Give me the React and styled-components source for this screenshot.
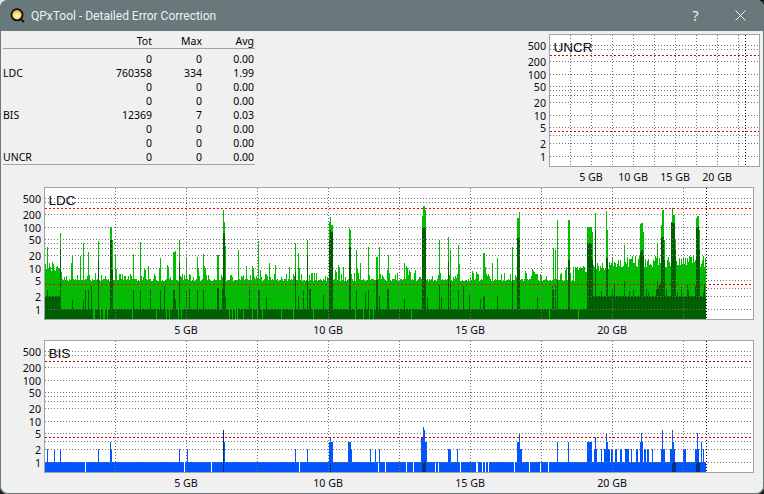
import React from "react";
import styled, { createGlobalStyle } from "styled-components";

const Global = createGlobalStyle`
  html, body { margin: 0; padding: 0; width: 764px; height: 494px; overflow: hidden;
    background: radial-gradient(circle at 0 0, #dfe3e3 7px, #1c1f20 9px); }
  #root { width: 764px; height: 494px; }
`;

const Win = styled.div`
  width: 764px; height: 494px; box-sizing: border-box; display: flex; flex-direction: column;
  background: #f0f0f0; border-radius: 8px; overflow: hidden; position: relative;
  box-shadow: inset 0 0 0 1px #69787b;
  font-family: "Noto Sans", Arial, sans-serif; font-size: 10.5px; color: #000;
`;
const TitleBar = styled.div`
  height: 31px; flex: none; display: flex; align-items: center; background: #69787b;
  padding-left: 10px; color: #eef1f1;
`;
const TitleText = styled.div`
  font-family: "Roboto", sans-serif; font-size: 12px; margin-left: 6px; flex: 1;
`;
const CapBtn = styled.div`
  width: 46px; height: 31px; display: flex; align-items: center; justify-content: center;
  font-family: "Noto Sans", sans-serif; font-size: 14px; color: #f2f4f4;
`;
const HelpBtn = styled(CapBtn)` padding-left: 3px; box-sizing: border-box; `;
const EdgeGap = styled.div` width: 1px; flex: none; `;
const TopRow = styled.div` height: 156px; flex: none; display: flex; justify-content: space-between; `;
const StatTable = styled.div` margin: 3px 0 0 3px; width: 252px; display: flex; flex-direction: column; `;
const StatRow = styled.div`
  display: grid; grid-template-columns: 100px 50px 50px 52px; height: 14px;
`;
const HeadRow = styled(StatRow)`
  height: 15px; box-sizing: border-box; border-bottom: 1px solid #a3a3a3; margin-bottom: 3px; 
`;
const StatBody = styled.div` border-bottom: 1px solid #a3a3a3; `;
const Cell = styled.div`
  line-height: 14px; text-align: ${(p) => (p.$left ? "left" : "right")};
  padding-right: ${(p) => (p.$left ? "0" : "1px")}; white-space: nowrap;
`;
const ChartSvg = styled.svg`
  display: block; flex: none;
  margin-top: ${(p) => p.$top || 0}px;
  text { font-family: "Noto Sans", Arial, sans-serif; font-size: 10.7px; fill: #0a0a14; }
  text.name { font-family: "Liberation Sans", Arial, sans-serif; font-size: 13.5px; }
`;

function rng(seed) {
  let s = seed;
  return () => {
    s = (s * 1664525 + 1013904223) % 4294967296;
    return s / 4294967296;
  };
}

const GRID = [198, 202, 214, 227, 239, 243, 248, 255, 268, 280, 288, 296, 309];
const RED = [208, 284];

const LDC_SPIKES = [
  [47, 247, 290, 1], [60, 233, 248, 1], [72, 256, 300, 1], [80, 256, 309, 1], [83, 243, 300, 1], [88, 252, 290, 1], [98, 241, 260, 1],
  [110, 227, 240, 1], [111, 227, 240, 1], [112, 240, 270, 1], [115, 255, 309, 1], [133, 254, 290, 1], [140, 242, 290, 1],
  [160, 258, 290, 1], [173, 252, 290, 2], [175, 251, 300, 1], [179, 240, 262, 1], [186, 258, 290, 1], [197, 257, 290, 1], [203, 254, 290, 1],
  [217, 255, 288, 2], [223, 210, 233, 1], [224, 222, 233, 1], [225, 246, 296, 1], [238, 250, 309, 1], [258, 241, 290, 1],
  [269, 263, 309, 1], [275, 265, 309, 1], [295, 243, 272, 1], [298, 253, 296, 1], [307, 240, 255, 1], [329, 222, 240, 1], [330, 217, 230, 2],
  [331, 225, 232, 2], [349, 228, 247, 2], [350, 230, 247, 1], [356, 250, 290, 1], [368, 247, 290, 1], [376, 257, 280, 2], [379, 247, 296, 1],
  [388, 255, 290, 1], [422, 216, 228, 2], [423, 206, 228, 2], [425, 210, 228, 1], [439, 240, 285, 1], [448, 237, 262, 1], [450, 250, 280, 1], [458, 245, 290, 1],
  [483, 253, 296, 2], [497, 258, 296, 1], [512, 247, 280, 1], [517, 218, 238, 2], [519, 212, 238, 1], [553, 248, 290, 1], [557, 220, 280, 1], [555, 250, 285, 1],
  [568, 220, 260, 2], [587, 227, 243, 3], [590, 227, 243, 2], [592, 232, 260, 1], [595, 213, 230, 1], [606, 211, 258, 1], [607, 230, 258, 1],
  [624, 245, 280, 1], [640, 224, 252, 1], [641, 223, 250, 2], [643, 232, 255, 1], [657, 244, 280, 1], [661, 225, 237, 1], [662, 210, 237, 2], [664, 240, 260, 1],
  [671, 222, 223, 2], [672, 208, 223, 1], [673, 215, 223, 2], [675, 240, 250, 1], [688, 262, 290, 1], [696, 218, 227, 2], [697, 216, 227, 2], [699, 230, 250, 1],
];

function buildLdc() {
  const r = rng(77);
  const light = [];
  const dark = [];
  const spikes = {};
  for (const [x, t, d, w] of LDC_SPIKES) for (let i = 0; i < w; i++) spikes[x + i] = [t, d];
  let carry = 0;
  for (let x = 45; x <= 705; x++) {
    let lt;
    const n = r();
    if (x < 60) lt = 262 + Math.floor(r() * 10);
    else if (x < 575) {
      lt = 279 + Math.floor(r() * 3);
      if (carry) { lt = carry; carry = 0; }
      else if (n < 0.15) { lt = 263 + Math.floor(r() * 14); if (r() < 0.3) carry = lt + 2; }
      else if (n < 0.34) lt = 273 + Math.floor(r() * 5);
    } else if (x < 587) lt = 266 + Math.floor(r() * 8);
    else if (x < 612) lt = 262 + Math.floor(r() * 10);
    else lt = 256 + Math.floor(r() * 12);
    let dk = x < 60 ? 296 : x >= 587 ? 296 : 309;
    const m = r();
    if (x < 587) {
      if (x >= 60 && m < 0.05) dk = 319;
      else if (m < 0.1) dk = 286 + Math.floor(r() * 14);
    } else {
      if (x >= 612 && m < 0.35) dk = 283 + Math.floor(r() * 10);
      else if (m < 0.12) dk = 285 + Math.floor(r() * 8);
    }
    if ((x >= 167 && x <= 186 && m > 0.7) || (x >= 226 && x <= 245 && m > 0.75) || x === 93 || x === 100 || x === 104 || x === 107) dk = 319;
    if (spikes[x]) { lt = spikes[x][0]; dk = Math.min(spikes[x][1], 309); }
    light.push(`M${x} ${lt}V319`);
    dark.push(`M${x} ${dk}V319`);
  }
  return { light: light.join(""), dark: dark.join("") };
}

const BIS_TALL = [
  [47, 449, 1], [54, 449, 1], [60, 449, 1], [98, 449, 1], [110, 442, 1], [111, 449, 1], [179, 449, 1], [187, 449, 1], [223, 430, 1], [224, 442, 1],
  [295, 449, 1], [307, 449, 1], [329, 442, 1], [330, 437, 1], [331, 442, 2], [348, 442, 3], [351, 449, 1], [370, 449, 1], [375, 449, 1], [379, 449, 1],
  [421, 437, 2], [423, 427, 1], [424, 430, 1], [425, 442, 2], [448, 449, 3], [457, 449, 1], [517, 442, 2], [519, 433, 1], [520, 449, 1], [521, 449, 1], [557, 442, 1],
  [568, 442, 1], [587, 442, 5], [594, 449, 3], [595, 437, 1], [601, 449, 1], [604, 449, 6], [606, 433, 1], [607, 442, 1], [611, 449, 2], [615, 449, 2], [620, 449, 2],
  [625, 449, 4], [631, 449, 1], [636, 449, 2], [640, 442, 3], [641, 433, 1], [644, 449, 2], [647, 449, 2], [652, 449, 1], [661, 449, 4], [662, 430, 1],
  [670, 449, 5], [672, 430, 1], [673, 442, 1], [683, 449, 3], [695, 449, 4], [697, 433, 1], [701, 442, 1], [703, 449, 1],
];
const BIS_GAPS = [85, 184, 211, 299, 378, 385, 406, 413, 435, 438, 460, 476, 477, 482, 485, 488, 514, 529, 540, 548];
const BIS_DARK = [[223, 223], [330, 330], [422, 425], [672, 675], [696, 699]];

function buildBis() {
  const tall = {};
  for (const [x, t, w] of BIS_TALL) for (let i = 0; i < w; i++) tall[x + i] = Math.min(t, tall[x + i] || 999);
  const blue = [];
  const dark = [];
  for (let x = 45; x <= 705; x++) {
    if (BIS_GAPS.includes(x)) continue;
    blue.push(`M${x} ${(tall[x] || 462) - 153}V319`);
  }
  for (const [a, b] of BIS_DARK) for (let x = a; x <= b; x++) dark.push(`M${x} ${x === 223 ? 430 - 153 : 462 - 153}V319`);
  return { blue: blue.join(""), dark: dark.join("") };
}

const Y_LABELS = [[500, 199], [200, 215], [100, 228], [50, 240], [20, 256], [10, 269], [5, 281], [2, 297], [1, 310]];

function Chart({ name, ox, left, right, vx, end, xlabels, children, top, red = "#e00000" }) {
  const width = 764 - ox;
  const X = (x) => x - ox;
  const Y = (y) => y - 187;
  return (
    <ChartSvg width={width} height={153} viewBox={`0 0 ${width} 153`} $top={top}>
      <rect x={X(left) + 0.5} y={0.5} width={right - left} height={132} fill="#fff" />
      <g transform={`translate(${-ox} -187)`} shapeRendering="crispEdges" strokeWidth="1" fill="none">
        {children}
      </g>
      <g shapeRendering="crispEdges" strokeWidth="1">
        {GRID.map((g) => (
          <line key={g} x1={X(left) + 1} x2={X(right)} y1={Y(g) + 0.5} y2={Y(g) + 0.5} stroke="#737373" strokeDasharray="1 2" />
        ))}
        {vx.map((v) => (
          <line key={v} x1={X(v) + 0.5} x2={X(v) + 0.5} y1={1} y2={132} stroke="#737373" strokeDasharray="1 2" />
        ))}
        <line x1={X(end) + 0.5} x2={X(end) + 0.5} y1={1} y2={132} stroke="#000" strokeDasharray="1 2" />
        {RED.map((g) => (
          <line key={g} x1={X(left) + 1} x2={X(right)} y1={Y(g) + 0.5} y2={Y(g) + 0.5} stroke={red} strokeDasharray="2 2" />
        ))}
      </g>
      <rect x={X(left) + 0.5} y={0.5} width={right - left} height={132} fill="none" stroke="#a3a3a3" shapeRendering="crispEdges" />
      {Y_LABELS.map(([v, y]) => (
        <text key={v} x={X(left) - 3} y={Y(y) + 4} textAnchor="end">{v}</text>
      ))}
      {xlabels.map(([t, x]) => (
        <text key={t} x={X(x)} y={147} textAnchor="middle">{t}</text>
      ))}
      <text className="name" x={X(left) + 4.5} y={18}>{name}</text>
    </ChartSvg>
  );
}

const ROWS = [
  ["", 0, 0, "0.00"], ["LDC", 760358, 334, "1.99"], ["", 0, 0, "0.00"], ["", 0, 0, "0.00"],
  ["BIS", 12369, 7, "0.03"], ["", 0, 0, "0.00"], ["", 0, 0, "0.00"], ["UNCR", 0, 0, "0.00"],
];

const WIDE_V = [115, 186, 257, 328, 399, 470, 541, 612, 683];
const WIDE_X = [["5 GB", 186], ["10 GB", 328], ["15 GB", 470], ["20 GB", 612]];
const NARROW_V = [570, 591, 612, 633, 654, 675, 696, 717, 738];
const NARROW_X = [["5 GB", 591], ["10 GB", 633], ["15 GB", 675], ["20 GB", 717]];

export default function App() {
  const ldc = buildLdc();
  const bis = buildBis();
  return (
    <Win>
      <Global />
      <TitleBar>
        <svg width="15" height="15" viewBox="0 0 15 15">
          <defs>
            <radialGradient id="q" cx="0.5" cy="0.6" r="0.6">
              <stop offset="0" stopColor="#fff8d8" />
              <stop offset="0.6" stopColor="#f6d467" />
              <stop offset="1" stopColor="#c98a1c" />
            </radialGradient>
          </defs>
          <path d="M10 10.5 L14 14" stroke="#111" strokeWidth="1.8" />
          <circle cx="7" cy="6.8" r="5.6" fill="url(#q)" stroke="#111" strokeWidth="1.8" />
        </svg>
        <TitleText>QPxTool - Detailed Error Correction</TitleText>
        <HelpBtn>?</HelpBtn>
        <CapBtn>
          <svg width="11" height="11" viewBox="0 0 11 11">
            <path d="M0.5 0.5L10.5 10.5M10.5 0.5L0.5 10.5" stroke="#f2f4f4" strokeWidth="1" fill="none" />
          </svg>
        </CapBtn>
        <EdgeGap />
      </TitleBar>
      <TopRow>
        <StatTable>
          <HeadRow>
            <Cell $left />
            <Cell>Tot</Cell>
            <Cell>Max</Cell>
            <Cell>Avg</Cell>
          </HeadRow>
          <StatBody>
            {ROWS.map((r, i) => (
              <StatRow key={i}>
                <Cell $left>{r[0]}</Cell>
                <Cell>{r[1]}</Cell>
                <Cell>{r[2]}</Cell>
                <Cell>{r[3]}</Cell>
              </StatRow>
            ))}
          </StatBody>
        </StatTable>
        <Chart name="UNCR" ox={510} left={549} right={759} vx={NARROW_V} end={745} xlabels={NARROW_X} top={3} />
      </TopRow>
      <Chart name="LDC" ox={0} left={44} right={753} vx={WIDE_V} end={706} xlabels={WIDE_X} red="#ff0000">
        <path d={ldc.light} stroke="#00bd00" transform="translate(0.5 0)" />
        <path d={ldc.dark} stroke="#005f00" transform="translate(0.5 0)" />
      </Chart>
      <Chart name="BIS" ox={0} left={44} right={753} vx={WIDE_V} end={706} xlabels={WIDE_X}>
        <path d={bis.blue} stroke="#0055ff" transform="translate(0.5 0)" />
        <path d={bis.dark} stroke="#00307f" transform="translate(0.5 0)" />
      </Chart>
    </Win>
  );
}
